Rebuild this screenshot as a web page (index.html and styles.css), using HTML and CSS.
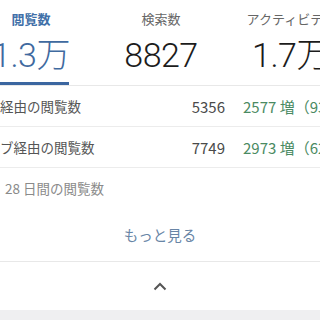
FILE: index.html
```html
<!DOCTYPE html>
<html lang="ja">
<head>
    <meta charset="UTF-8">
    <meta name="viewport" content="width=device-width, initial-scale=1.0">
    <title>閲覧数</title>
    <link rel="stylesheet" href="styles.css">
</head>
<body>
    <div class="tabs">
        <div class="tab active">
            <div class="tab-label">閲覧数</div>
            <div class="tab-value">1.3万</div>
            <div class="tab-bar"></div>
        </div>
        <div class="tab">
            <div class="tab-label">検索数</div>
            <div class="tab-value">8827</div>
        </div>
        <div class="tab">
            <div class="tab-label">アクティビティ</div>
            <div class="tab-value">1.7万</div>
        </div>
    </div>

    <div class="row">
        <div class="row-name">経由の閲覧数</div>
        <div class="row-value">5356</div>
        <div class="row-diff">2577 増（93%）</div>
    </div>
    <div class="row">
        <div class="row-name">ブ経由の閲覧数</div>
        <div class="row-value">7749</div>
        <div class="row-diff">2973 増（62%）</div>
    </div>
    <div class="row last">
        <div class="row-name muted">28 日間の閲覧数</div>
    </div>

    <div class="more">もっと見る</div>

    <div class="collapse">
        <svg width="14" height="9" viewBox="0 0 14 9">
            <path d="M1.5 7.5 L7 2 L12.5 7.5" fill="none" stroke="#555" stroke-width="2"/>
        </svg>
    </div>
    <div class="footer-band"></div>
</body>
</html>
```

FILE: styles.css
```css
body {
    margin: 0;
    width: 320px;
    height: 320px;
    overflow: hidden;
    background: #fff;
    font-family: "Noto Sans CJK JP", "Noto Sans", sans-serif;
    color: #444;
}
.tabs {
    display: flex;
    margin-left: -34px;
    border-bottom: 1px solid #e8e8e8;
}
.tab {
    flex: none;
    width: 130px;
    padding-top: 10px;
    text-align: center;
    white-space: nowrap;
}
.tab-label {
    font-size: 13px;
    line-height: 18px;
    color: #666;
}
.tab-value {
    margin-top: 7px;
    font-family: Roboto, "Noto Sans CJK JP", sans-serif;
    font-weight: 300;
    font-size: 34px;
    line-height: 40px;
    letter-spacing: -0.5px;
    color: #1c1c1c;
}
.tab.active .tab-label {
    color: #4170a8;
    font-weight: bold;
}
.tab.active .tab-value {
    color: #3f6a9f;
}
.tab-bar {
    margin-top: 7px;
    width: 103px;
    height: 3px;
    background: #3b66a0;
}
.tab:not(.active) .tab-value {
    margin-bottom: 10px;
}
.row {
    display: flex;
    align-items: center;
    height: 40px;
    border-bottom: 1px solid #ececec;
    font-size: 13.5px;
    white-space: nowrap;
}
.row.last {
    border-bottom: none;
}
.row-name {
    flex: 1;
    color: #555;
}
.row-name.muted {
    padding-left: 5px;
    color: #8a8a8a;
}
.row-value {
    width: 60px;
    margin-right: 18px;
    text-align: right;
    color: #4a4a4a;
    font-size: 15px;
}
.row-diff {
    width: 77px;
    overflow: hidden;
    color: #4a8a62;
    font-size: 15px;
}
.more {
    height: 53px;
    line-height: 53px;
    text-align: center;
    font-size: 14.5px;
    color: #6885a6;
    border-bottom: 1px solid #e8e8e8;
}
.collapse {
    display: flex;
    align-items: center;
    justify-content: center;
    height: 48px;
}
.footer-band {
    height: 20px;
    background: #efeff1;
}
```
